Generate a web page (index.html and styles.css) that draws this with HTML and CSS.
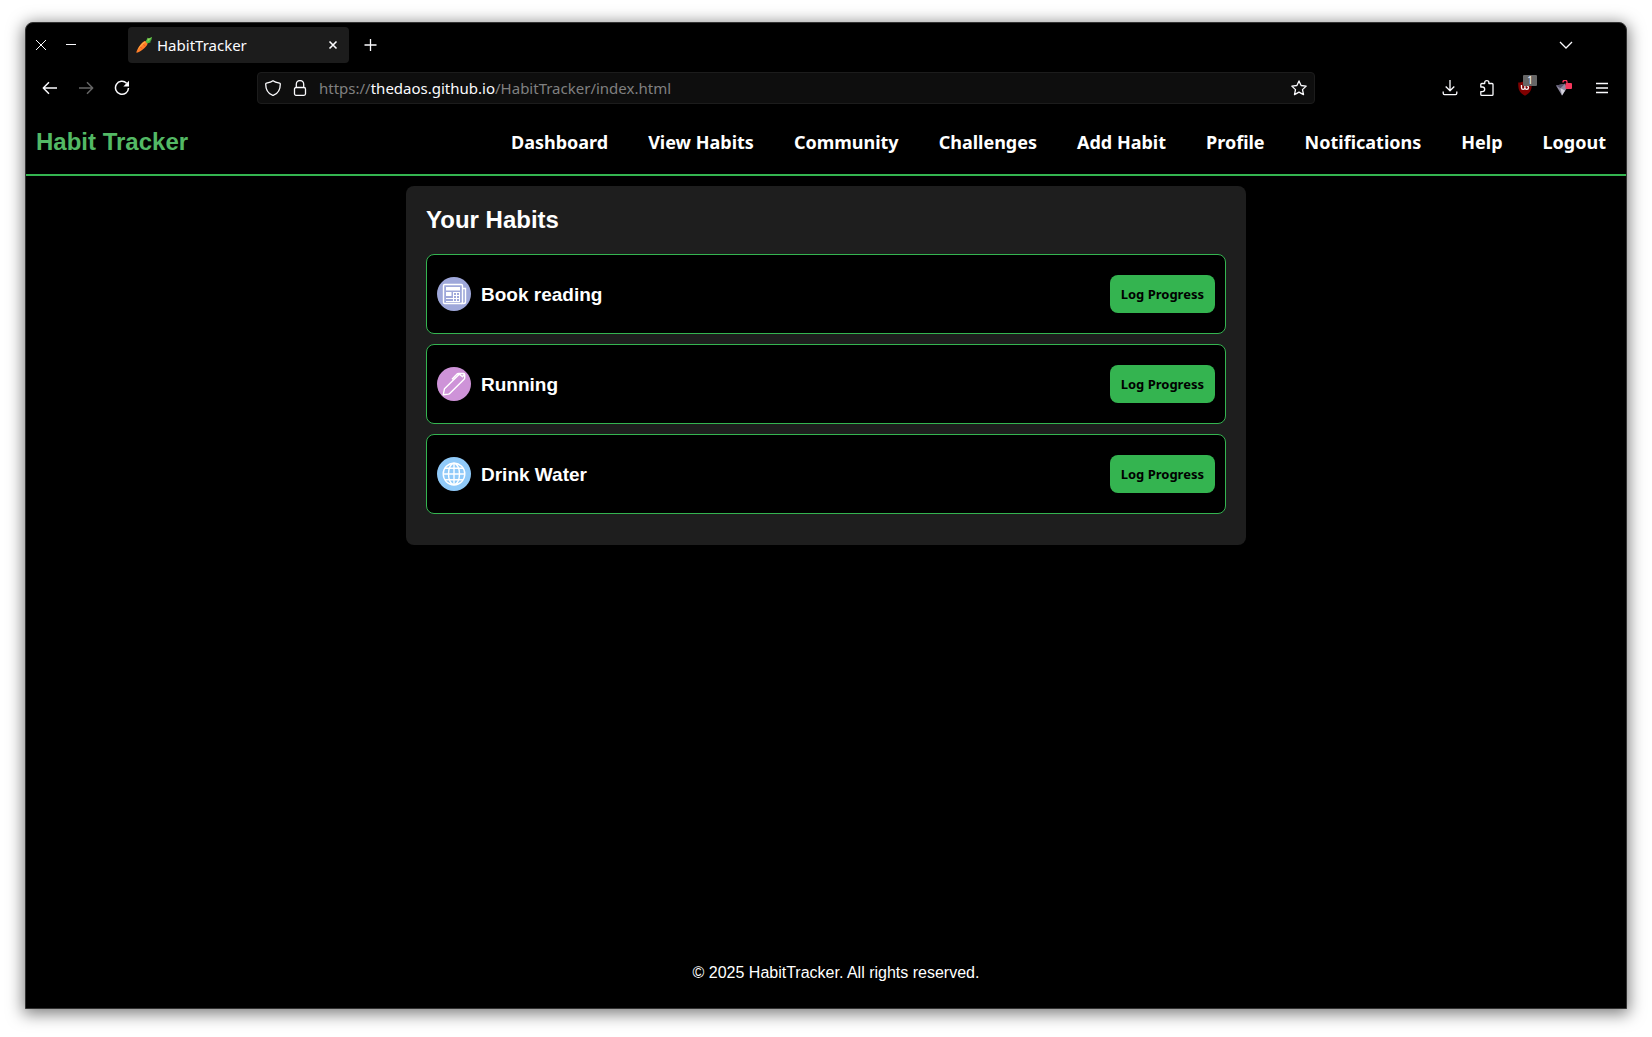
FILE: index.html
```html
<!DOCTYPE html>
<html lang="en">
<head>
<meta charset="utf-8">
<meta name="viewport" content="width=device-width, initial-scale=1">
<title>HabitTracker</title>
<link rel="stylesheet" href="styles.css">
</head>
<body>
<div class="window">
  <div class="tab-bar">
    <div class="window-controls">
      <button class="icon-button" type="button" aria-label="Close window"><svg width="16" height="16" viewBox="0 0 16 16"><path d="M3 3l10 10M13 3L3 13"/></svg></button>
      <button class="icon-button" type="button" aria-label="Minimize window"><svg width="16" height="16" viewBox="0 0 16 16"><path d="M3 7.500h10"/></svg></button>
    </div>
    <div class="tab">
      <svg class="favicon" width="16" height="16" viewBox="0 0 16 16"><path fill="#ff7e29" d="M.3 15.700C.8 12 5 6 8.300 4.200c1.500-.8 3.800 1 3.200 2.700C10 10.500 4 15.200.3 15.700z"/><path fill="#ffad42" d="M1.500 13.500C3 9.500 6 6 8.500 4.600l1 .6C7 7 4 10 1.500 13.500z"/><path fill="#e9591c" d="M4.500 9.800l2 1.400-.5.500-2-1.300zM7.500 7l2 1.800-.5.500-2-1.700z"/><path fill="#4cb840" d="M9.500 4.500L11.800.8l1 1L16 0l-.7 3.200-1 .8.400 1.200-3.500 1.300z"/><path fill="#91dc5a" d="M11.800.8l1 1L16 0l-4.500 4.700z"/></svg>
      <span class="tab-title">HabitTracker</span>
      <button class="tab-close" type="button" aria-label="Close tab"><svg width="16" height="16" viewBox="0 0 16 16"><path stroke-width="1.600" d="M4.500 4.500l7 7M11.500 4.500l-7 7"/></svg></button>
    </div>
    <button class="icon-button" type="button" aria-label="New tab"><svg width="16" height="16" viewBox="0 0 16 16"><path stroke-width="1.300" d="M8.500 2v12M2.500 8h12"/></svg></button>
    <button class="icon-button all-tabs" type="button" aria-label="List all tabs"><svg width="16" height="16" viewBox="0 0 16 16"><path stroke-width="1.300" d="M2 5l6 6 6-6"/></svg></button>
  </div>

  <div class="toolbar">
    <div class="toolbar-group">
      <button class="icon-button" type="button" aria-label="Back"><svg width="16" height="16" viewBox="0 0 16 16"><path stroke-width="1.500" stroke-linejoin="round" d="M15 8H1.500M7 2.300L1.300 8 7 13.700"/></svg></button>
      <button class="icon-button" type="button" aria-label="Forward" disabled><svg width="16" height="16" viewBox="0 0 16 16"><path stroke-width="1.500" stroke-linejoin="round" d="M1 8h13.500M9 2.300L14.700 8 9 13.700"/></svg></button>
      <button class="icon-button" type="button" aria-label="Reload"><svg width="16" height="16" viewBox="0 0 16 16"><path stroke-width="1.500" d="M12.600 3.200A6.500 6.500 0 1 0 14.500 8"/><path class="solid" d="M15 .8V6.500H9.300z"/></svg></button>
    </div>
    <div class="address-bar">
      <svg width="16" height="16" viewBox="0 0 16 16"><path stroke-width="1.300" stroke-linejoin="round" d="M8 .7c-2 1.500-4.500 2-6.500 2.400-.5.100-.8.400-.8.900C.7 9 3 13.500 7.400 15.200c.4.200.8.200 1.200 0C13 13.500 15.300 9 15.300 4c0-.5-.3-.8-.8-.9C12.500 2.700 10 2.200 8 .7z"/></svg>
      <svg width="16" height="16" viewBox="0 0 16 16"><path stroke-width="1.300" d="M4.300 7.500V4.200a3.700 3.700 0 0 1 7.400 0v3.300"/><rect stroke-width="1.300" x="2.500" y="7.500" width="11" height="7.800" rx="1.500"/></svg>
      <div class="url" role="textbox" contenteditable="true" spellcheck="false" aria-label="Address">https://<span class="url-host">thedaos.github.io</span>/HabitTracker/index.html</div>
      <button class="star" type="button" aria-label="Bookmark this page"><svg width="16" height="16" viewBox="0 0 16 16"><path stroke-width="1.300" stroke-linejoin="round" d="M8 .9l2.100 4.600 5.100.6-3.700 3.500 1 5L8 12.100l-4.500 2.500 1-5L.8 6.100l5.100-.6z"/></svg></button>
    </div>
    <div class="toolbar-group toolbar-end">
      <button class="icon-button" type="button" aria-label="Downloads"><svg width="16" height="16" viewBox="0 0 16 16"><path stroke-width="1.300" stroke-linejoin="round" d="M8 0v10.500M3.700 6.500L8 10.700l4.300-4.200M1.200 11.500v1.800c0 .8.500 1.400 1.300 1.400h11c.8 0 1.300-.6 1.300-1.400v-1.800"/></svg></button>
      <button class="icon-button" type="button" aria-label="Extensions"><svg width="16" height="16" viewBox="0 0 16 16"><path stroke-width="1.300" stroke-linejoin="round" d="M.8 7V4.500c0-.6.400-1 1-1H4.700V2.800a2.100 2.100 0 0 1 4.200 0v.7H12c.6 0 1 .4 1 1v9.900c0 .5-.4.900-1 .9H1.800c-.6 0-1-.4-1-.9v-2.800h1.600a2.200 2.200 0 0 0 0-4.600z"/></svg></button>
      <button class="icon-button" type="button" aria-label="Content blocker, 1 request blocked"><svg width="16" height="16" viewBox="0 0 16 16"><path fill="#800000" stroke="none" d="M7 .5C5 2 3 2.500.2 2.500c0 7 .8 10 6.800 13.300 6-3.300 6.800-6.300 6.800-13.300C11 2.500 9 2 7 .5z"/><path stroke-width="1.300" d="M3.500 5v2.700a1.700 1.700 0 0 0 3.400 0V5M6.900 7.700a1.800 1.800 0 1 0 1.800-1.900"/></svg><span class="badge">1</span></button>
      <button class="icon-button" type="button" aria-label="VPN"><svg width="16" height="16" viewBox="0 0 16 16"><path fill="#8f8ba0" stroke="none" d="M0 5.500l9-1.700 2 4.200-5 7.500z"/><path fill="#57536b" stroke="none" d="M0 5.500l9-1.700-4.500 4.500z"/><path fill="#d5d2dd" stroke="none" d="M4.500 8.300L9 10.500l-3 5z"/><path stroke="#f7375c" stroke-width="1.300" d="M7 2.500a2 2 0 0 1 4-.5v2"/><rect fill="#f7375c" stroke="none" x="9.500" y="3" width="6.500" height="6" rx="1"/></svg></button>
      <button class="icon-button" type="button" aria-label="Menu"><svg width="16" height="16" viewBox="0 0 16 16"><path stroke-width="1.300" d="M2 3.500h12M2 8h12M2 12.500h12"/></svg></button>
    </div>
  </div>

  <header class="site-header">
    <h1 class="brand">Habit Tracker</h1>
    <nav class="site-nav">
      <a href="#dashboard">Dashboard</a>
      <a href="#habits">View Habits</a>
      <a href="#community">Community</a>
      <a href="#challenges">Challenges</a>
      <a href="#add">Add Habit</a>
      <a href="#profile">Profile</a>
      <a href="#notifications">Notifications</a>
      <a href="#help">Help</a>
      <a href="#logout">Logout</a>
    </nav>
  </header>

  <main class="habits" id="habits">
    <h2 class="habits-title">Your Habits</h2>
    <ul class="habit-list">
      <li class="habit">
        <svg class="habit-icon reading" width="34" height="34" viewBox="0 0 34 34"><rect x="6.500" y="7.500" width="19" height="19" rx="1.200"/><path d="M25.500 26.500h1.200c1 0 1.800-.7 1.800-1.800V11.500h-2.500M24 26.500h3"/><path fill="#fff" stroke="none" d="M9 10h14v3.500H9zM9 15h5.500v4H9z"/><path stroke-width="1" d="M9 21.500h14M9 24.500h14M16 15.500h7M16 18.500h7M16.500 15v9.500M19.500 15v9.500M22.500 15v9.500"/></svg>
        <h3 class="habit-name">Book reading</h3>
        <button class="log-button" type="button">Log Progress</button>
      </li>
      <li class="habit">
        <svg class="habit-icon running" width="34" height="34" viewBox="0 0 34 34"><path stroke-linejoin="round" d="M6.300 27.700l1.200-6L22.300 7.300c.5-.5 1.200-.8 1.900-.8h2.300c.7 0 1.200.5 1.200 1.200v3.100c0 .6-.2 1.100-.6 1.500L13 26.300c-.4.400-1 .7-1.600.8zM15 12.300l4.300-4.600c.7-.8 1.500-1.200 2.500-1.200h3M22.300 7.300l3.200 2.400 2-2.600"/></svg>
        <h3 class="habit-name">Running</h3>
        <button class="log-button" type="button">Log Progress</button>
      </li>
      <li class="habit">
        <svg class="habit-icon water" width="34" height="34" viewBox="0 0 34 34"><circle cx="17" cy="17" r="10.800"/><ellipse cx="17" cy="17" rx="5.500" ry="10.800"/><path d="M17 6.200v21.600M6.200 17h21.600M8 11.300h18M8 22.700h18"/></svg>
        <h3 class="habit-name">Drink Water</h3>
        <button class="log-button" type="button">Log Progress</button>
      </li>
    </ul>
  </main>

  <footer class="site-footer">© 2025 HabitTracker. All rights reserved.</footer>
</div>
</body>
</html>
```
FILE: styles.css
```css
* {
  box-sizing: border-box;
}

body {
  display: flex;
  flex-direction: column;
  min-height: 100vh;
  margin: 0;
  padding: 22px 25px 28px;
  background: #fff;
  color: #fff;
  font-family: "Liberation Sans", Arial, sans-serif;
  font-size: 16px;
}

h1, h2, h3, ul {
  margin: 0;
  padding: 0;
}

button {
  border: 0;
  padding: 0;
  background: none;
  color: inherit;
  font: inherit;
}

svg {
  flex: none;
  fill: none;
  stroke: currentColor;
}

.solid {
  fill: currentColor;
  stroke: none;
}

.window {
  display: flex;
  flex: 1;
  flex-direction: column;
  border: 1px solid #333;
  border-radius: 8px 8px 0 0;
  background: #000;
  box-shadow: 0 3px 16px 2px rgba(0, 0, 0, 0.5);
}

/* Browser chrome */

.tab-bar,
.toolbar {
  display: flex;
  align-items: center;
  color: #fbfbfe;
  font-family: "Noto Sans", sans-serif;
  font-size: 15px;
}

.tab-bar {
  height: 44px;
}

.window-controls {
  display: flex;
  width: 102px;
}

.icon-button {
  position: relative;
  display: flex;
  align-items: center;
  justify-content: center;
  width: 30px;
  height: 32px;
}

.icon-button:disabled {
  color: #666;
}

.tab {
  display: flex;
  align-items: center;
  width: 221px;
  height: 36px;
  margin-right: 6px;
  padding: 0 8px;
  border-radius: 4px;
  background: #1c1c1c;
}

.favicon {
  stroke: none;
}

.tab-title {
  flex: 1;
  margin-left: 5px;
}

.tab-close,
.star {
  display: flex;
}

.all-tabs {
  margin-left: auto;
  margin-right: 45px;
}

.toolbar {
  height: 42px;
  padding: 0 5px 0 6px;
}

.toolbar-group {
  display: flex;
}

.toolbar-group .icon-button {
  width: 36px;
}

.address-bar {
  display: flex;
  flex: 1;
  align-items: center;
  gap: 11px;
  height: 32px;
  margin: 0 116px 0 117px;
  padding: 0 7px;
  border: 1px solid #1c1c1c;
  border-radius: 4px;
  background: #0e0e0e;
}

.url {
  flex: 1;
  color: #808080;
  white-space: nowrap;
}

.url-host {
  color: #fbfbfe;
}

.toolbar-end .icon-button {
  width: 38px;
}

.badge {
  position: absolute;
  top: 3px;
  right: 8px;
  width: 14px;
  height: 11px;
  border-radius: 1px;
  background: #666;
  font-size: 10px;
  line-height: 11px;
  text-align: center;
}

/* Site */

.site-header {
  display: flex;
  align-items: center;
  justify-content: space-between;
  height: 67px;
  padding: 0 20px 0 10px;
  border-bottom: 2px solid #34b450;
}

.brand {
  color: #53b965;
  font-size: 24px;
}

.site-nav {
  display: flex;
  gap: 40px;
  font-family: "Noto Sans", sans-serif;
  font-size: 18px;
  font-weight: 700;
}

.site-nav a {
  color: #fff;
  text-decoration: none;
}

.habits {
  width: 100%;
  max-width: 840px;
  margin: 10px auto;
  padding: 20px 20px 31px;
  border-radius: 8px;
  background: #1e1e1e;
}

.habits-title {
  margin-bottom: 20px;
  font-size: 24px;
  line-height: 28px;
}

.habit-list {
  display: grid;
  gap: 10px;
  list-style: none;
}

.habit {
  display: flex;
  align-items: center;
  gap: 10px;
  height: 80px;
  padding: 0 10px;
  border: 1px solid #34b450;
  border-radius: 8px;
  background: #000;
}

.habit-icon {
  border-radius: 50%;
  color: #fff;
  stroke-width: 1.4px;
}

.reading {
  background: #9fa8da;
}

.running {
  background: #ce93d8;
}

.water {
  background: #90caf9;
}

.habit-name {
  flex: 1;
  padding-top: 2px;
  font-size: 19px;
}

.log-button {
  height: 38px;
  padding: 0 11px;
  border-radius: 8px;
  background: #34b450;
  color: #000;
  font-family: "Noto Sans", sans-serif;
  font-size: 13px;
  font-weight: 700;
}

.site-footer {
  margin-top: auto;
  padding: 0 0 26px 20px;
  line-height: 18px;
  text-align: center;
}
```
